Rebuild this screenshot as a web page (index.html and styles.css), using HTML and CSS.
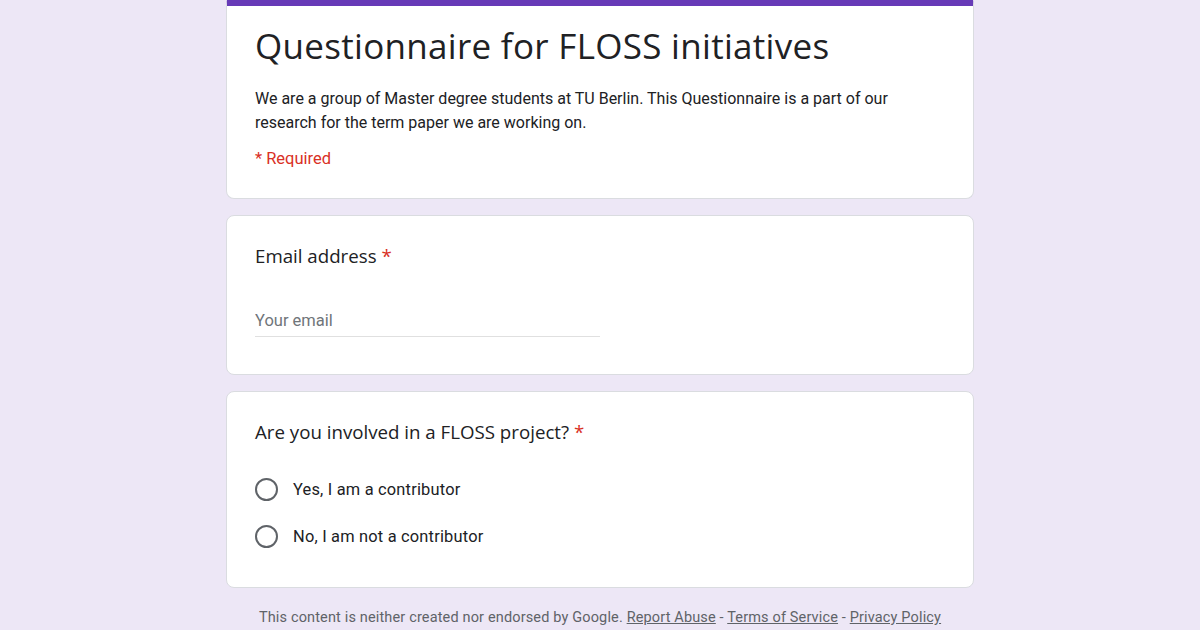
FILE: index.html
```html
<!DOCTYPE html>
<html lang="en">
  <head>
    <meta charset="UTF-8" />
    <meta name="viewport" content="width=device-width, initial-scale=1.0" />
    <title>Questionnaire for FLOSS initiatives</title>
    <link rel="stylesheet" href="styles.css">
  </head>
  <body>
    <div class="form-container">
      <div class="form-card header-card">
        <h1 class="form-title">Questionnaire for FLOSS initiatives</h1>
        <p class="form-desc">
          We are a group of Master degree students at TU Berlin. This Questionnaire is a part of our
          research for the term paper we are working on.
        </p>
        <p class="required-note">* Required</p>
      </div>

      <div class="form-card question-card">
        <div class="question-title">Email address <span class="star">*</span></div>
        <input type="email" class="text-input" placeholder="Your email" />
      </div>

      <div class="form-card question-card choice-card">
        <div class="question-title">Are you involved in a FLOSS project? <span class="star">*</span></div>
        <div class="options">
          <label class="option">
            <span class="radio"></span>
            <span class="option-label">Yes, I am a contributor</span>
          </label>
          <label class="option">
            <span class="radio"></span>
            <span class="option-label">No, I am not a contributor</span>
          </label>
        </div>
      </div>

      <div class="footer">
        This content is neither created nor endorsed by Google.
        <a href="#">Report Abuse</a> - <a href="#">Terms of Service</a> - <a href="#">Privacy Policy</a>
      </div>
    </div>
  </body>
</html>
```

FILE: styles.css
```css
body {
  font-family: Roboto, Arial, sans-serif;
  background-color: #ede7f6;
  margin: 0;
  color: #202124;
}
.form-container {
  width: 748px;
  margin: -4px auto 0;
  display: flex;
  flex-direction: column;
  gap: 16px;
}
.form-card {
  background-color: #fff;
  border: 1px solid #dadce0;
  border-radius: 8px;
  padding: 0 28px;
}
.header-card {
  border-top: 10px solid #673ab7;
  padding-top: 20px;
  padding-bottom: 29px;
}
.form-title {
  font-family: "Open Sans", Arial, sans-serif;
  font-size: 35px;
  font-weight: 400;
  letter-spacing: 0.3px;
  line-height: 40px;
  margin: 0;
  color: #202124;
}
.form-desc {
  font-size: 16px;
  line-height: 24px;
  margin: 21px 0 0;
  color: #202124;
}
.required-note {
  color: #d93025;
  font-size: 16.5px;
  line-height: 20px;
  margin: 14px 0 0;
}
.question-card {
  padding-top: 27px;
  padding-bottom: 37px;
}
.question-title {
  font-family: "Open Sans", Arial, sans-serif;
  font-size: 18.7px;
  line-height: 26px;
  color: #202124;
}
.star {
  color: #d93025;
}
.text-input {
  display: block;
  width: 345px;
  margin-top: 41px;
  padding: 0 0 4px;
  border: none;
  border-bottom: 1px solid #e0e0e0;
  font-family: Roboto, Arial, sans-serif;
  font-size: 16.5px;
  line-height: 22px;
  outline: none;
  background: transparent;
}
.text-input::placeholder {
  color: #70757a;
}
.choice-card {
  padding-bottom: 39px;
}
.options {
  display: flex;
  flex-direction: column;
  gap: 23px;
  margin-top: 32px;
}
.option {
  display: flex;
  align-items: center;
  height: 24px;
  cursor: pointer;
}
.radio {
  width: 19px;
  height: 19px;
  border: 2px solid #5f6368;
  border-radius: 50%;
  margin-right: 15px;
}
.option-label {
  font-size: 16.4px;
  letter-spacing: 0.2px;
  color: #202124;
}
.footer {
  text-align: center;
  font-size: 14.5px;
  letter-spacing: 0.15px;
  line-height: 20px;
  color: #5f6368;
  padding: 4px 0 20px;
}
.footer a {
  color: #5f6368;
}
```
